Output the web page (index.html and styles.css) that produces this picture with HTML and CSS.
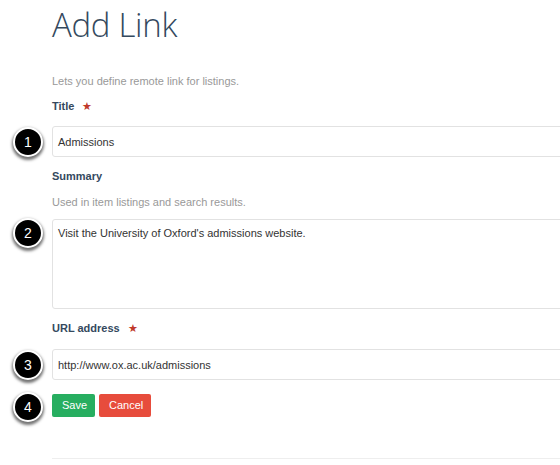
FILE: index.html
```html
<!DOCTYPE html>
<html>
<head>
<meta charset="utf-8">
<link rel="stylesheet" href="styles.css">
</head>
<body>
<div class="page">
  <h1 class="title">Add Link</h1>
  <p class="intro">Lets you define remote link for listings.</p>

  <div class="field">
    <label class="label">Title <span class="req">★</span></label>
    <div class="control">
      <span class="badge">1</span>
      <div class="input">Admissions</div>
    </div>
  </div>

  <div class="field field-summary">
    <label class="label">Summary</label>
    <p class="help">Used in item listings and search results.</p>
    <div class="control control-area">
      <span class="badge badge-top">2</span>
      <div class="input textarea">Visit the University of Oxford's admissions website.</div>
    </div>
  </div>

  <div class="field field-url">
    <label class="label">URL address <span class="req">★</span></label>
    <div class="control control-url">
      <span class="badge">3</span>
      <div class="input">http://www.ox.ac.uk/admissions</div>
    </div>
  </div>

  <div class="control actions">
    <span class="badge">4</span>
    <button class="btn btn-save">Save</button>
    <button class="btn btn-cancel">Cancel</button>
  </div>

  <hr class="rule">
</div>
</body>
</html>
```
FILE: styles.css
```css
html, body {
  margin: 0;
  padding: 0;
  background: #fff;
  overflow: hidden;
}
body {
  width: 560px;
  height: 465px;
  font-family: "Liberation Sans", Arial, sans-serif;
  font-size: 11px;
  color: #333;
}
.page {
  padding-left: 52px;
  width: 508px;
  overflow: hidden;
}
.title {
  margin: 0;
  padding-top: 4px;
  font-family: "Open Sans", "Lato", sans-serif;
  font-weight: 300;
  font-size: 33px;
  line-height: 42px;
  color: #34495e;
  letter-spacing: -0.3px;
}
.intro {
  margin: 28px 0 0;
  color: #999;
  line-height: 14px;
}
.field {
  margin-top: 11px;
}
.field-summary {
  margin-top: 12px;
}
.field-url {
  margin-top: 12px;
}
.label {
  display: block;
  font-weight: bold;
  color: #34495e;
  line-height: 14px;
}
.req {
  color: #c0392b;
  font-size: 11px;
  margin-left: 5px;
  font-weight: normal;
}
.help {
  margin: 12px 0 0;
  color: #999;
  line-height: 14px;
}
.control {
  position: relative;
  margin-top: 13px;
}
.control-area {
  margin-top: 10px;
}
.control-url {
  margin-top: 14px;
}
.input {
  box-sizing: border-box;
  width: 540px;
  height: 31px;
  border: 1px solid #e2e2e2;
  border-radius: 3px;
  padding: 8px 5px;
  line-height: 14px;
  color: #333;
  background: #fff;
}
.textarea {
  height: 90px;
  padding-top: 6px;
}
.badge {
  position: absolute;
  left: -39px;
  top: 1px;
  width: 26px;
  height: 26px;
  border-radius: 50%;
  background: #000;
  border: 2px solid #fff;
  box-shadow: 0 2px 3px 1px rgba(0,0,0,0.55);
  color: #fff;
  font-size: 14px;
  line-height: 26px;
  text-align: center;
}
.badge-top {
  top: -1px;
}
.actions {
  margin-top: 14px;
  display: flex;
  gap: 4px;
}
.actions .badge {
  top: -2px;
}
.btn {
  font-family: "Liberation Sans", Arial, sans-serif;
  font-size: 11px;
  color: #fff;
  border: none;
  border-radius: 2px;
  height: 23px;
  padding: 0 10px;
  line-height: 23px;
}
.btn-save {
  background: #27ae60;
  width: 43px;
}
.btn-cancel {
  background: #e74c3c;
  width: 52px;
}
.rule {
  margin: 41px 0 0;
  border: none;
  border-top: 1px solid #eee;
  width: 540px;
}
```
